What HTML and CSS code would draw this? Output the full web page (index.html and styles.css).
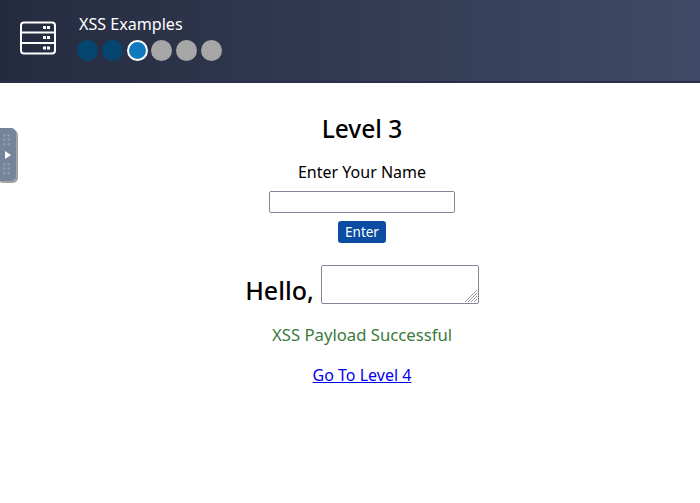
FILE: index.html
```html
<!DOCTYPE html>
<html lang="en">
<head>
  <meta charset="UTF-8" />
  <title>XSS Examples</title>
  <link rel="stylesheet" href="styles.css">
</head>
<body>

  <header class="topbar">
    <svg class="logo" width="38" height="34" viewBox="0 0 38 34" fill="none" stroke="#fff" stroke-width="2">
      <rect x="2" y="1.5" width="34" height="31" rx="3" />
      <path d="M2 11.5h34M2 22h34" />
      <path d="M24 6.5h3M28 6.5h3M24 16.5h3M28 16.5h3M24 27h3M28 27h3" stroke-width="3" />
    </svg>
    <div class="title-block">
      <div class="title">XSS Examples</div>
      <div class="steps">
        <span class="step done"></span>
        <span class="step done"></span>
        <span class="step current"></span>
        <span class="step"></span>
        <span class="step"></span>
        <span class="step"></span>
      </div>
    </div>
  </header>

  <!-- side drawer handle -->
  <div class="handle">
    <div class="dots"></div>
    <div class="arrow"></div>
    <div class="dots"></div>
  </div>

  <main class="content">
    <h1>Level 3</h1>
    <label class="name-label" for="name">Enter Your Name</label>
    <input type="text" id="name" />
    <button>Enter</button>
    <div class="hello">
      <span>Hello,</span>
      <div class="textarea-wrap">
        <textarea></textarea>
        <svg class="grip" width="12" height="12" viewBox="0 0 12 12" stroke="#9a9a9a" stroke-width="1">
          <path d="M0 12L12 0M3 12L12 3M6 12L12 6M9 12L12 9" />
        </svg>
      </div>
    </div>
    <p class="success">XSS Payload Successful</p>
    <a href="#">Go To Level 4</a>
  </main>

</body>
</html>
```

FILE: styles.css
```css
body {
  margin: 0;
  background-color: #fff;
  color: #000;
  font-family: "Noto Sans", sans-serif;
}

.topbar {
  display: flex;
  align-items: center;
  gap: 21px;
  height: 81px;
  padding-left: 19px;
  background: linear-gradient(to right, #252b3f, #404a66);
  border-bottom: 2px solid #2a3048;
}

.logo {
  flex: none;
  margin-top: -5px;
}

.title-block {
  margin-top: -6px;
  margin-left: -1px;
}

.title {
  color: #fff;
  font-size: 16.1px;
  line-height: 20px;
  margin-left: 2px;
  margin-bottom: 6px;
}

.steps {
  display: flex;
  gap: 3.8px;
}

.step {
  width: 21px;
  height: 21px;
  border-radius: 50%;
  background: #a6a6a6;
}

.step.done {
  background: #04466f;
}

.step.current {
  box-sizing: border-box;
  background: #0e7abd;
  border: 2px solid #fff;
}

.handle {
  position: absolute;
  left: -4px;
  top: 128px;
  width: 20px;
  height: 53px;
  box-sizing: border-box;
  padding: 5px 0;
  display: flex;
  flex-direction: column;
  align-items: center;
  justify-content: space-between;
  background: #76849a;
  border-radius: 5px;
  box-shadow: 2px 2px 0 #a3a3a3;
}

.dots {
  width: 9px;
  height: 14px;
  background: radial-gradient(circle, #929dae 1px, transparent 1.5px) 0 0 / 4.5px 4.5px;
}

.arrow {
  width: 0;
  height: 0;
  margin-left: 3px;
  border-left: 6px solid #fff;
  border-top: 4px solid transparent;
  border-bottom: 4px solid transparent;
}

.content {
  display: flex;
  flex-direction: column;
  align-items: center;
  padding-left: 24px;
}

h1 {
  margin: 30px 0 0;
  font-size: 24.5px;
  line-height: 32px;
  font-weight: 500;
}

.name-label {
  margin-top: 16px;
  font-size: 16px;
  line-height: 22px;
}

input {
  width: 186px;
  height: 22px;
  margin-top: 8px;
  box-sizing: border-box;
  border: 1px solid #85859a;
  border-radius: 2px;
}

button {
  margin-top: 8px;
  height: 22px;
  width: 48px;
  padding: 0;
  border: none;
  border-radius: 3px;
  background-color: #0b4da2;
  color: #fff;
  font-family: inherit;
  font-size: 13.5px;
}

.hello {
  display: flex;
  align-items: flex-end;
  gap: 7px;
  margin-top: 22px;
  font-size: 25px;
  font-weight: 500;
}

.hello span {
  margin-bottom: -3px;
}

.textarea-wrap {
  position: relative;
}

textarea {
  display: block;
  width: 158px;
  height: 39px;
  box-sizing: border-box;
  border: 1px solid #85859a;
  border-radius: 2px;
  resize: none;
}

.grip {
  position: absolute;
  right: 2px;
  bottom: 2px;
}

.success {
  margin: 20px 0 0;
  font-size: 16.7px;
  line-height: 22px;
  color: #3b7a3b;
}

a {
  margin-top: 18px;
  font-size: 16px;
  line-height: 22px;
  color: #0000ee;
}
```
